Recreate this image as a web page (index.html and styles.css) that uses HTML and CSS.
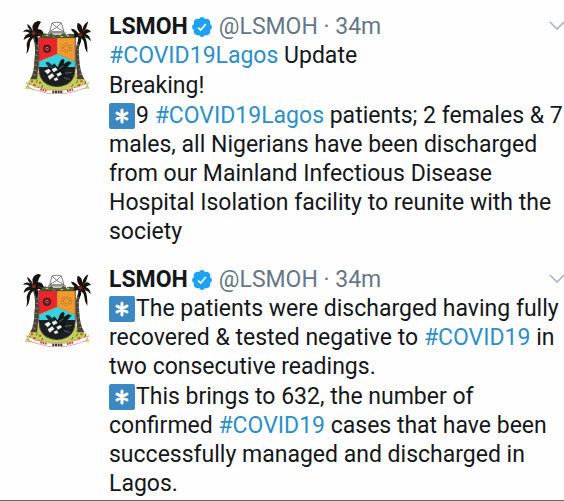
FILE: index.html
```html
<!DOCTYPE html>
<html lang="en">
<head>
	<meta charset="UTF-8">
	<meta name="viewport" content="width=device-width, initial-scale=1">
	<title>LSMOH</title>
	<link rel="stylesheet" href="styles.css">
</head>
<body>

	<!-- shared icons -->
	<svg class="sprite" aria-hidden="true">
		<symbol id="crest" viewBox="24 30 204 222">
			<!-- grass -->
			<path d="M30 236 L44 208 L66 188 L188 188 L208 206 L224 236 Q200 234 180 242 L76 244 Q54 236 30 236Z" fill="#c3cf5a"/>
			<path d="M48 214h6M60 202h7M54 226h8M72 218h7M66 234h8M184 204h7M196 214h7M188 226h8M206 226h7M176 234h7" stroke="#c8523a" stroke-width="6"/>
			<path d="M40 230l5-11M64 218l4-9M52 207l5-8M80 234l3-9M210 222l3-10M184 220l4-9M196 204l5-6M170 230l4-8" stroke="#4f7a2a" stroke-width="3"/>
			<!-- trunks -->
			<path d="M54 84 Q64 110 58 150 Q58 185 46 208 L66 208 Q72 160 71 122 Q70 98 62 82Z" fill="#4a4236"/>
			<path d="M200 84 Q188 108 193 150 Q195 185 208 208 L188 208 Q182 165 182 122 Q184 98 194 82Z" fill="#4a4236"/>
			<path d="M62 105l7 3M62 120l7 2M61 135l7 2M60 150l7 2M59 165l7 2M56 180l8 2M52 194l9 2M186 105l7-3M185 120l7-2M186 135l7-2M187 150l6-2M188 165l7-2M191 180l7-2M193 194l9-2" stroke="#b7a98a" stroke-width="2"/>
			<!-- left palm -->
			<path d="M57 72 Q44 42 66 34 Q72 32 78 36 Q70 46 68 58 Q80 56 85 68 Q92 86 86 94 Q80 78 68 78 Q72 94 66 108 Q60 96 58 82 Q44 90 44 108 Q42 124 34 132 Q38 114 35 102 Q38 88 46 80 Q34 82 26 90 Q28 74 44 70 Q36 62 24 66 Q32 54 46 62 Q36 50 37 42 Q50 50 57 72Z" fill="#15120f"/>
			<!-- right palm -->
			<path d="M197 72 Q182 56 188 38 Q202 42 202 60 Q204 44 220 34 Q216 48 211 60 Q220 54 228 66 Q220 66 212 72 Q226 76 227 94 Q220 84 210 82 Q218 96 217 128 Q210 120 208 102 Q206 90 199 84 Q200 98 192 108 Q187 96 190 82 Q178 80 174 94 Q170 80 178 70 Q170 64 168 56 Q182 56 190 70Z" fill="#15120f"/>
			<circle cx="56" cy="70" r="6" fill="#7b2520"/>
			<circle cx="196" cy="74" r="6" fill="#7b2520"/>
			<path d="M53 62l-9-5M69 70l10 5M204 65l11-8M207 78l10 6" stroke="#7b5146" stroke-width="2"/>
			<!-- top frame -->
			<path d="M111 39 Q125 34 139 39 L147 65 L104 65Z M111 39 L125 52 L139 39 M104 65 L125 52 L147 65" fill="#fff" stroke="#68686b" stroke-width="2.5"/>
			<path d="M100 68H151V77H100Z" fill="#c9c8c1" stroke="#55554f" stroke-width="2"/>
			<path d="M79 75 Q91 68 101 75 L109 70 L116 77 H137 L145 70 L153 76 Q164 69 178 75 L175 86 L157 82 L145 88 H107 L94 83 L80 86Z" fill="#49642d" stroke="#2d3827" stroke-width="2"/>
			<path d="M92 76h8M112 82h10M136 80h8M155 77h7" stroke="#d5dc9c" stroke-width="3"/>
			<!-- shield -->
			<path d="M71 83 H127 V132 L71 155Z" fill="#e8262c"/>
			<path d="M127 83 H181 V155 L127 132Z" fill="#f39a2e"/>
			<path d="M71 155 L127 132 L181 155 V174 H71Z" fill="#35d3df"/>
			<path d="M71 171 H181 Q180 210 157 222 Q126 238 95 222 Q72 208 71 171Z" fill="#1b1f21"/>
			<path d="M71 83 H181 V170 Q181 210 157 222 Q126 237 95 222 Q71 209 71 170Z" fill="none" stroke="#4a3c34" stroke-width="2.5"/>
			<path d="M71 155 L127 132 L181 155 M127 84V132" fill="none" stroke="#b9803f" stroke-width="2"/>
			<circle cx="96" cy="116" r="12" fill="#361516"/>
			<circle cx="96" cy="116" r="8" fill="none" stroke="#a63432" stroke-width="2"/>
			<circle cx="96" cy="116" r="4" fill="none" stroke="#dc6b62" stroke-width="3"/>
			<g fill="#f9b34b" stroke="#a5641c" stroke-width="2">
				<circle cx="144" cy="109" r="4"/>
				<circle cx="154" cy="104" r="4"/>
				<circle cx="165" cy="109" r="4"/>
				<circle cx="166" cy="119" r="4"/>
				<circle cx="154" cy="124" r="4"/>
				<circle cx="143" cy="119" r="4"/>
			</g>
			<!-- boat and fisherman -->
			<path d="M100 178 L118 160 L128 172 L136 152 L143 146 L149 151 L146 162 L160 153 L170 158 L154 174 L145 189 L157 201 L143 207 L124 190 L108 184Z" fill="#11191b"/>
			<path d="M91 158 Q101 152 108 163 L118 168 L115 178 L100 171Z" fill="#17363b"/>
			<path d="M88 183 L101 176 L108 183 L98 193Z M110 178 L122 172 L128 180 L116 187Z M98 199 L112 190 L118 198 L104 209Z M124 192 L136 186 L141 193 L129 200Z M116 206l10-4 4 8-10 3z" fill="#eceeed"/>
			<path d="M132 176l14-9M146 202l18 7M150 190l20-3" stroke="#7f8788" stroke-width="2"/>
			<!-- ribbon -->
			<path d="M34 218 Q43 224 52 226 Q60 234 77 234 Q99 243 127 241 Q153 243 176 233 Q192 233 202 225 Q212 223 221 218 L213 233 Q192 240 180 244 Q153 252 126 252 Q96 252 76 244 Q55 240 44 233Z" fill="#fff" stroke="#dd8580" stroke-width="2"/>
			<path d="M76 238l20 5M156 243l20-5" stroke="#c43c3c" stroke-width="6" stroke-dasharray="5 2"/>
			<path d="M112 246h30" stroke="#393333" stroke-width="7" stroke-dasharray="6 2"/>
		</symbol>

		<symbol id="verified" viewBox="0 0 20 20">
			<path d="M10 0 Q12 0 13 2 Q16 1 17 3 Q19 4 18 7 Q20 8 20 10 Q20 12 18 13 Q19 16 17 17 Q16 19 13 18 Q12 20 10 20 Q8 20 7 18 Q4 19 3 17 Q1 16 2 13 Q0 12 0 10 Q0 8 2 7 Q1 4 3 3 Q4 1 7 2 Q8 0 10 0Z" fill="#1da1f2"/>
			<path d="M6 10.5 L8.7 13 L13.8 7" fill="none" stroke="#fff" stroke-width="1.7"/>
		</symbol>

		<symbol id="asterisk" viewBox="0 0 26 26">
			<rect width="26" height="26" rx="2" fill="#3b88c3"/>
			<path d="M13 7V19M8 10L18 16M18 10L8 16" stroke="#fff" stroke-width="3" stroke-linecap="round"/>
		</symbol>

		<symbol id="chevron" viewBox="0 0 16 10">
			<path d="M1 1L8 8L15 1" fill="none" stroke="#aab8c2" stroke-width="1.6"/>
		</symbol>
	</svg>

	<main class="feed">
		<article class="tweet">
			<svg class="avatar" role="img" aria-label="LSMOH"><use href="#crest"/></svg>
			<div class="content">
				<header class="tweet-header">
					<strong class="name">LSMOH</strong>
					<svg class="verified" role="img" aria-label="Verified"><use href="#verified"/></svg>
					<span class="handle">@LSMOH · 34m</span>
					<button class="more" aria-label="More"><svg><use href="#chevron"/></svg></button>
				</header>
				<div class="text">
					<p><a href="#">#COVID19Lagos</a> Update</p>
					<p>Breaking!</p>
					<p><svg class="emoji"><use href="#asterisk"/></svg>9 <a href="#">#COVID19Lagos</a> patients; 2 females &amp; 7<br>
					males, all Nigerians have been discharged<br>
					from our Mainland Infectious Disease<br>
					Hospital Isolation facility to reunite with the<br>
					society</p>
				</div>
			</div>
		</article>

		<article class="tweet">
			<svg class="avatar" role="img" aria-label="LSMOH"><use href="#crest"/></svg>
			<div class="content">
				<header class="tweet-header">
					<strong class="name">LSMOH</strong>
					<svg class="verified" role="img" aria-label="Verified"><use href="#verified"/></svg>
					<span class="handle">@LSMOH · 34m</span>
					<button class="more" aria-label="More"><svg><use href="#chevron"/></svg></button>
				</header>
				<div class="text">
					<p><svg class="emoji"><use href="#asterisk"/></svg>The patients were discharged having fully<br>
					recovered &amp; tested negative to <a href="#">#COVID19</a> in<br>
					two consecutive readings.</p>
					<p><svg class="emoji"><use href="#asterisk"/></svg>This brings to 632, the number of<br>
					confirmed <a href="#">#COVID19</a> cases that have been<br>
					successfully managed and discharged in<br>
					Lagos.</p>
				</div>
			</div>
		</article>
	</main>

</body>
</html>
```

FILE: styles.css
```css
:root {
	--text: #14171a;
	--muted: #657786;
	--link: #2b8fcb;
}

body {
	margin: 0;
	background: #fefefe;
	color: var(--text);
	font-family: Roboto, "Liberation Sans", sans-serif;
	font-size: 23px;
	line-height: 29px;
	overflow: hidden;
}

.sprite {
	position: absolute;
	width: 0;
	height: 0;
}

.feed {
	display: flex;
	flex-direction: column;
	gap: 19px;
	padding: 12px 0 2px;
	border-bottom: 1px solid #666;
}

.tweet {
	display: flex;
	gap: 18px;
	padding-left: 23px;
}

.avatar {
	flex: none;
	width: 68px;
	height: 74px;
	margin-top: 8px;
}

.content {
	flex: 1;
	min-width: 0;
}

.tweet-header {
	display: flex;
	align-items: center;
	white-space: nowrap;
}

.name {
	font-weight: 700;
}

.verified {
	flex: none;
	width: 20px;
	height: 20px;
	margin: 0 7px 0 4px;
}

.handle {
	color: var(--muted);
}

.more {
	display: flex;
	margin-left: auto;
	margin-right: -1px;
	padding: 0 0 2px;
	border: none;
	background: none;
	cursor: pointer;
}

.more svg {
	width: 16px;
	height: 10px;
}

.text {
	white-space: nowrap;
}

.text p {
	margin: 0;
}

.text p + p {
	margin-top: 1px;
}

.text a {
	color: var(--link);
	text-decoration: none;
}

.emoji {
	width: 26px;
	height: 26px;
	margin-right: 1px;
	vertical-align: -6px;
}
```
